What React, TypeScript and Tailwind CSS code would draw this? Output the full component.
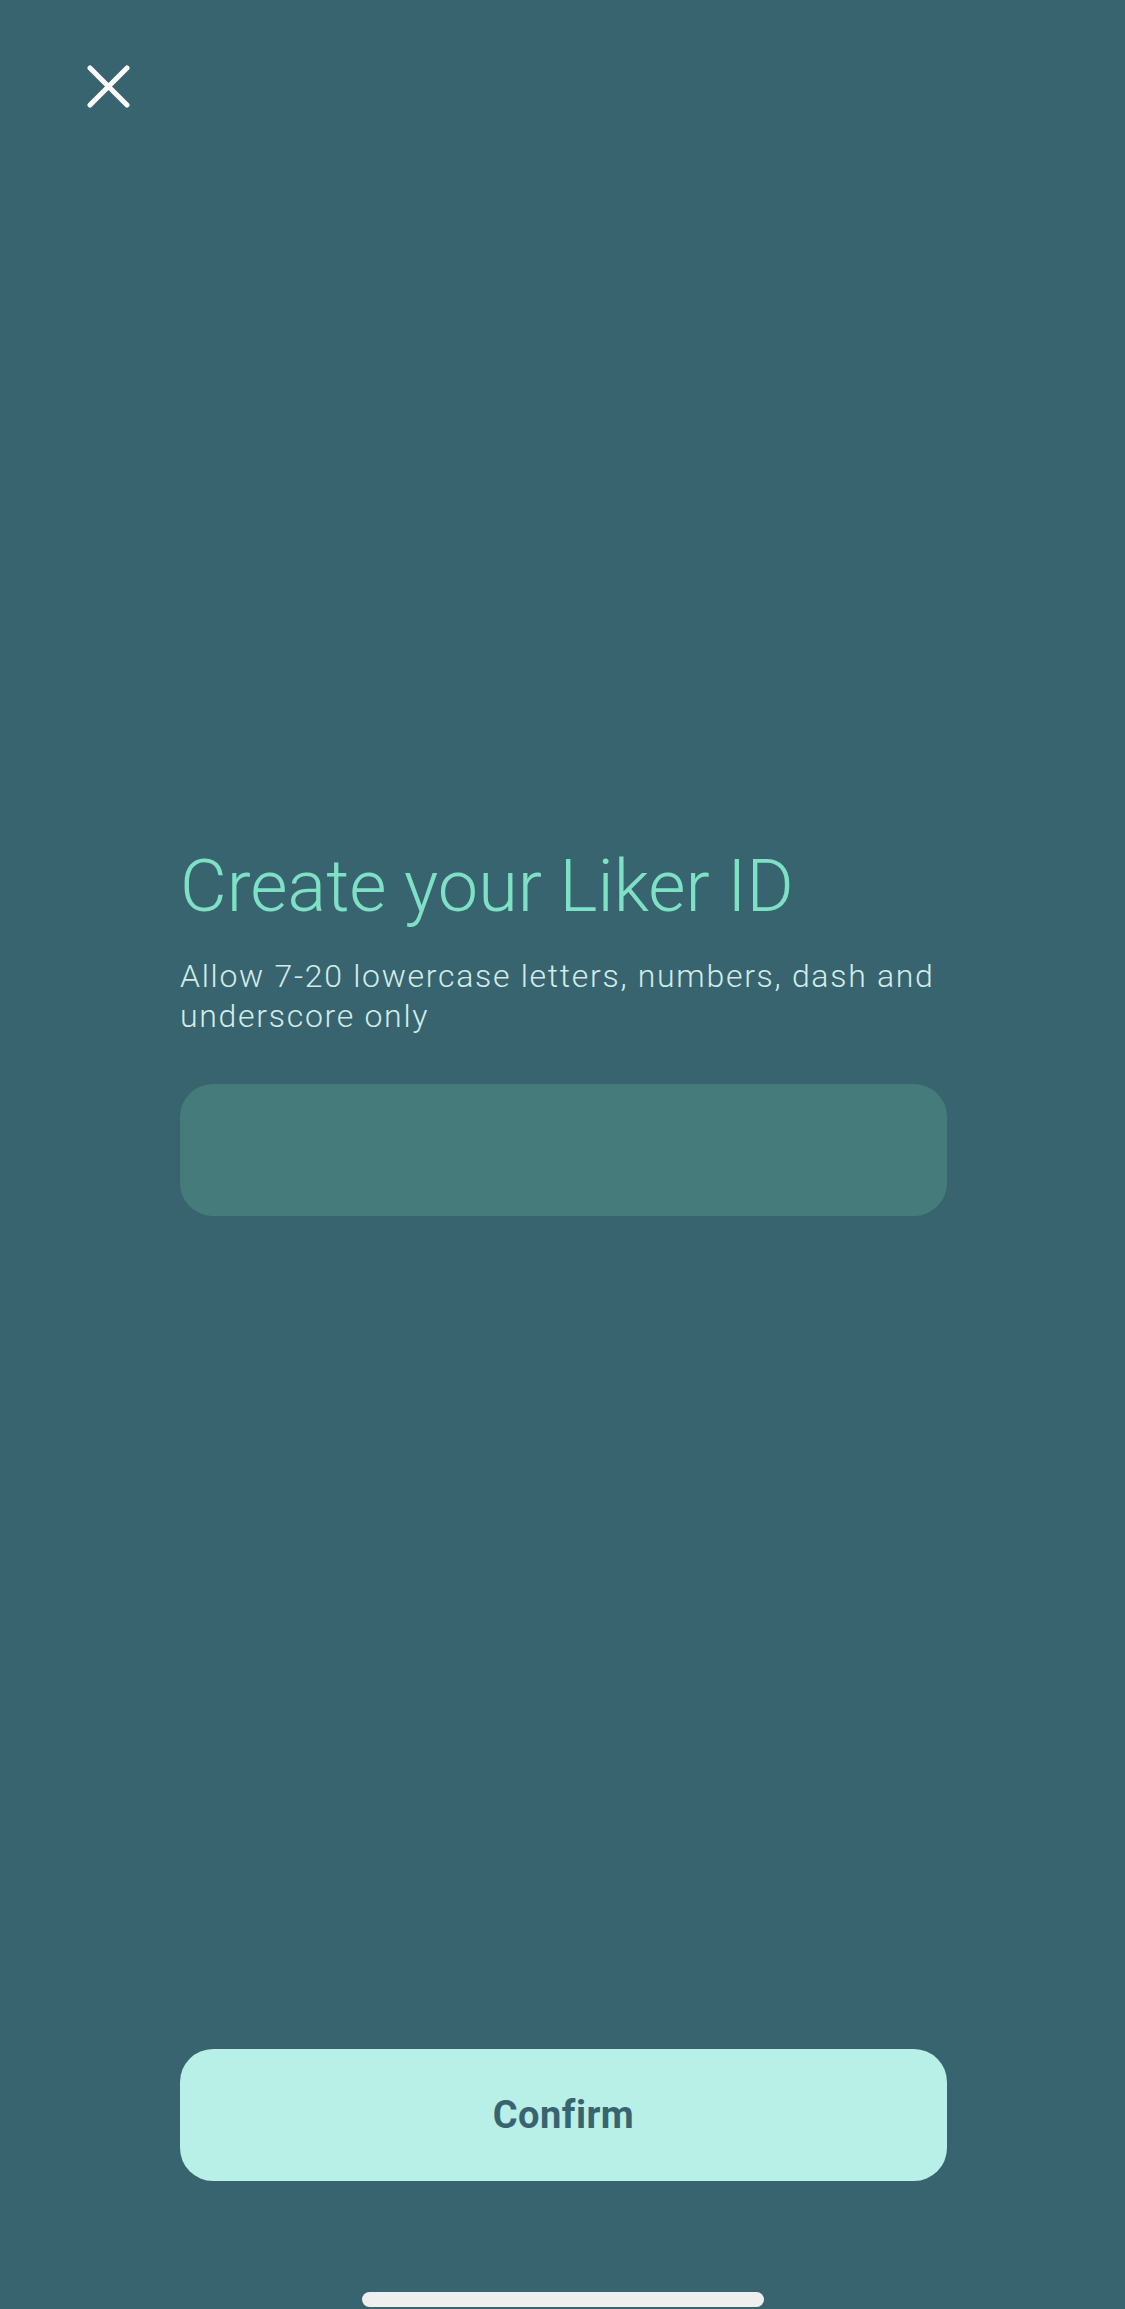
export default function App() {
  return (
    <div
      className="w-full h-[2309px] bg-[#386470] flex flex-col"
      style={{ fontFamily: "Roboto, 'Liberation Sans', sans-serif" }}
    >
      {/* close */}
      <div className="pt-[65px] pl-[87px]">
        <svg width="43" height="43" viewBox="0 0 43 43" fill="none">
          <path
            d="M3 3 L40 40 M40 3 L3 40"
            stroke="#ffffff"
            strokeWidth="5"
            strokeLinecap="round"
          />
        </svg>
      </div>

      {/* content */}
      <div className="flex-1 flex flex-col pl-[180px] pr-[178px]">
        <h1 className="mt-[743px] text-[72px] leading-none font-light text-[#7ee0c4]">
          Create your Liker ID
        </h1>
        <p className="mt-[33px] text-[32px] leading-[40px] font-light tracking-[1.7px] text-[#d2ece7]">
          Allow 7-20 lowercase letters, numbers, dash and underscore only
        </p>
        <div className="mt-[48px] h-[132px] rounded-[33px] bg-[#457b7b]" />

        <button className="mt-auto h-[132px] rounded-[33px] bg-[#b8efe6] text-[#386470] text-[38px] font-bold tracking-[0.5px]">
          Confirm
        </button>
      </div>

      {/* home indicator */}
      <div className="mt-[111px] mb-[2px] mx-auto w-[402px] h-[15px] rounded-full bg-[#efefef]" />
    </div>
  )
}
